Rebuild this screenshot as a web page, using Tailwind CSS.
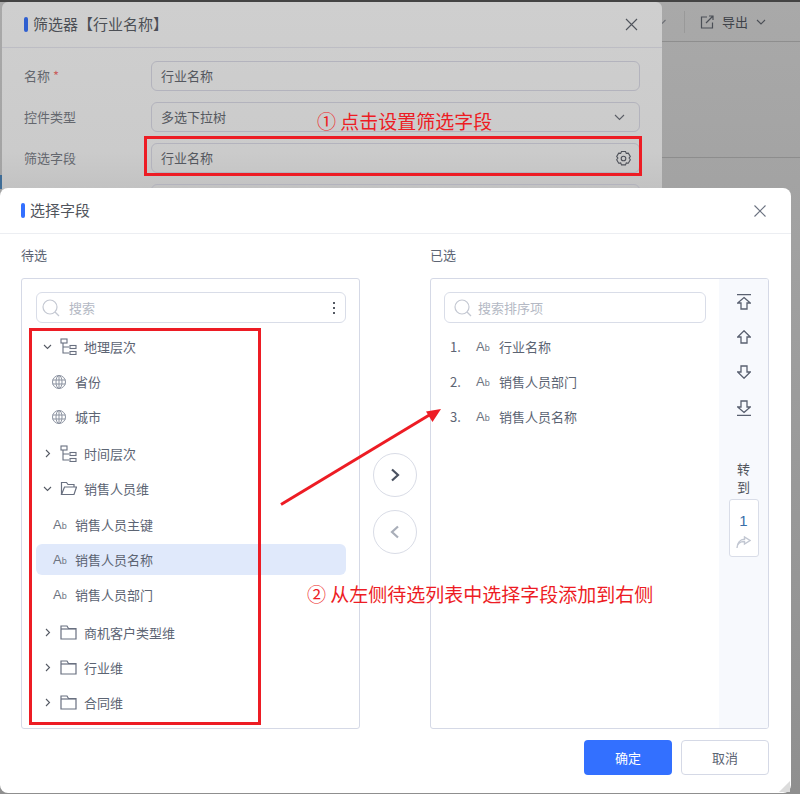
<!DOCTYPE html>
<html lang="zh-CN">
<head>
  <meta charset="UTF-8">
  <title>选择字段</title>
  <script src="https://cdn.jsdelivr.net/npm/@tailwindcss/browser@4"></script>
</head>
<body class="relative w-[800px] h-[794px] overflow-hidden bg-linear-to-b from-[#a9a9a9] to-[#8f8f8f] text-[13px] text-[#5c6473] font-['Noto_Sans_CJK_SC','Liberation_Sans',sans-serif]">
  <!-- page behind the dialogs -->
  <div class="h-[2px] bg-[#444444]"></div>
  <div class="absolute left-[662px] right-0 top-[2px] h-[40px] border-b border-[#8e8e8e] flex items-center text-[#3f434a]">
    <svg class="shrink-0" width="4" height="6" viewBox="0 0 4 6" fill="none" stroke="#6b6e74" stroke-width="1.100"><path d="M0 4.500L3.500 1"/></svg>
    <span class="w-[19px] h-[22px] border-r border-[#999999]"></span>
    <svg class="ml-[15px] mr-[8px]" width="14" height="14" viewBox="0 0 14 14" fill="none" stroke="#4b4f56" stroke-width="1.2"><path d="M7 2H1.500v11h11V7.500"/><path d="M6 8l7-7M9 1h4v4"/></svg>
    <span>导出</span>
    <svg class="ml-[8px]" width="10" height="6" viewBox="0 0 10 6" fill="none" stroke="#4b4f56" stroke-width="1.1"><path d="M1 1l4 4 4-4"/></svg>
  </div>
  <div class="absolute left-[662px] right-0 top-[157px] h-px bg-[#8d8d8d]"></div>
  <div class="absolute left-0 top-[175px] w-[2px] h-[14px] bg-[#3e6c96]"></div>

  <!-- filter dialog, dimmed -->
  <div class="absolute left-[2px] top-[2px] w-[660px] h-[300px] rounded-t-md bg-linear-to-b from-[#cfcfcf] via-[#cbcbcb] to-[#a8a8a8] text-[#55585f]">
    <div class="h-[46px] border-b border-[#bdbdc4] flex items-center pl-[22px] pr-[24px]">
      <span class="w-[4px] h-[15px] rounded-sm bg-[#2f5fd0] mr-[5px]"></span>
      <span class="text-[15px] text-[#4c4f55]">筛选器【行业名称】</span>
      <svg class="ml-auto" width="13" height="13" viewBox="0 0 13 13" stroke="#50545c" stroke-width="1.1"><path d="M1 1l11 11M12 1L1 12"/></svg>
    </div>
    <div class="pl-[22px] pr-[22px] pt-[13px] flex flex-col gap-[11px]">
      <div class="flex items-center">
        <span class="w-[127px] text-[#64676e]">名称 <span class="text-[#c9605f]">*</span></span>
        <div class="flex-1 h-[30px] border border-[#b3b3bd] rounded-md flex items-center px-[9px]">行业名称</div>
      </div>
      <div class="flex items-center">
        <span class="w-[127px] text-[#64676e]">控件类型</span>
        <div class="flex-1 h-[30px] border border-[#b3b3bd] rounded-md flex items-center justify-between pl-[9px] pr-[14px]">
          <span>多选下拉树</span>
          <svg width="11" height="7" viewBox="0 0 11 7" fill="none" stroke="#5b5e66" stroke-width="1.1"><path d="M1 1l4.500 4.500L10 1"/></svg>
        </div>
      </div>
      <div class="flex items-center">
        <span class="w-[127px] text-[#64676e]">筛选字段</span>
        <div class="flex-1 h-[30px] border border-[#b3b3bd] rounded-md flex items-center justify-between pl-[9px] pr-[7px]">
          <span>行业名称</span>
          <svg width="17" height="17" viewBox="0 0 17 17" fill="none" stroke="#4f525a" stroke-width="1.1"><path d="M6.500 1.500h4l.8 1.900 2-.3 2 3.400-1.200 1.600 1.200 1.700-2 3.400-2-.3-.8 2h-4l-.8-2-2 .3-2-3.400 1.200-1.700L1.700 6.500l2-3.400 2 .3z"/><circle cx="8.500" cy="8.500" r="2.300"/></svg>
        </div>
      </div>
      <div class="flex items-center">
        <span class="w-[127px]"></span>
        <div class="flex-1 h-[30px] border border-[#b3b3bd] rounded-md"></div>
      </div>
    </div>
  </div>

  <!-- field picker dialog -->
  <div class="absolute left-0 top-[188px] w-[791px] h-[605px] bg-white rounded-lg flex flex-col">
    <div class="h-[46px] shrink-0 border-b border-[#eceef2] flex items-center pl-[21px] pr-[25px]">
      <span class="w-[4px] h-[15px] rounded-sm bg-[#3370ff] mr-[5px]"></span>
      <span class="text-[15px] text-[#50545c]">选择字段</span>
      <svg class="ml-auto" width="12" height="12" viewBox="0 0 12 12" stroke="#6b7280" stroke-width="1.1"><path d="M.5.500l11 11M11.500.500l-11 11"/></svg>
    </div>
    <div class="flex-1 flex px-[21px]">
      <!-- left column -->
      <div class="w-[339px] shrink-0 flex flex-col">
        <div class="h-[44px] pt-[11px] leading-[20px]">待选</div>
        <div class="h-[451px] border border-[#d5d9e6] rounded-[3px] pl-[14px] pr-[13px] pt-[13px]">
          <div class="h-[31px] border border-[#d9dde8] rounded-md flex items-center pl-[5px] pr-[10px] text-[#b4b9c4]">
            <svg class="mr-[9px]" width="18" height="18" viewBox="0 0 18 18" fill="none" stroke="#c4c8d2" stroke-width="1.2"><circle cx="8" cy="8" r="7"/><path d="M13 13l4 4"/></svg>
            <span>搜索</span>
            <span class="ml-auto flex flex-col gap-[3px]"><i class="block w-[2px] h-[2px] bg-[#555a64]"></i><i class="block w-[2px] h-[2px] bg-[#555a64]"></i><i class="block w-[2px] h-[2px] bg-[#555a64]"></i></span>
          </div>
          <div class="mt-[6px] flex flex-col">
            <div class="h-[35px] flex items-center">
              <svg class="ml-[7px] mr-[8px]" width="9" height="6" viewBox="0 0 9 6" fill="none" stroke="#555a64" stroke-width="1.100"><path d="M1 1l3.500 3.500L8 1"/></svg>
              <svg class="mr-[7px]" width="17" height="17" viewBox="0 0 17 17" fill="none" stroke="#697080" stroke-width="1.100"><rect x="1" y="1" width="6" height="4"/><path d="M3 5v10h6M3 9h6"/><rect x="10" y="7.500" width="6" height="3"/><rect x="10" y="13.500" width="6" height="3"/></svg>
              <span>地理层次</span>
            </div>
            <div class="h-[35px] flex items-center pl-[16px]">
              <svg class="mr-[9px]" width="14" height="14" viewBox="0 0 14 14" fill="none" stroke="#8b92a0"><circle cx="7" cy="7" r="6.500"/><ellipse cx="7" cy="7" rx="3" ry="6.500"/><path d="M7 .5v13M.5 5h13M.5 9h13"/></svg>
              <span>省份</span>
            </div>
            <div class="h-[35px] flex items-center pl-[16px]">
              <svg class="mr-[9px]" width="14" height="14" viewBox="0 0 14 14" fill="none" stroke="#8b92a0"><circle cx="7" cy="7" r="6.500"/><ellipse cx="7" cy="7" rx="3" ry="6.500"/><path d="M7 .5v13M.5 5h13M.5 9h13"/></svg>
              <span>城市</span>
            </div>
            <div class="mt-[2px] h-[35px] flex items-center">
              <svg class="ml-[9px] mr-[9px]" width="6" height="9" viewBox="0 0 6 9" fill="none" stroke="#555a64" stroke-width="1.100"><path d="M1 1l3.500 3.500L1 8"/></svg>
              <svg class="mr-[7px]" width="17" height="17" viewBox="0 0 17 17" fill="none" stroke="#697080" stroke-width="1.100"><rect x="1" y="1" width="6" height="4"/><path d="M3 5v10h6M3 9h6"/><rect x="10" y="7.500" width="6" height="3"/><rect x="10" y="13.500" width="6" height="3"/></svg>
              <span>时间层次</span>
            </div>
            <div class="h-[35px] flex items-center">
              <svg class="ml-[7px] mr-[8px]" width="9" height="6" viewBox="0 0 9 6" fill="none" stroke="#555a64" stroke-width="1.100"><path d="M1 1l3.500 3.500L8 1"/></svg>
              <svg class="mr-[7px]" width="17" height="15" viewBox="0 0 17 15" fill="none" stroke="#697080" stroke-width="1.200"><path d="M1.500 13.500V1.500h5l1.500 2h6v2.500"/><path d="M1.500 13.500l3-7.500h12l-2.500 7.500z"/></svg>
              <span>销售人员维</span>
            </div>
            <div class="mt-px h-[35px] flex items-center pl-[17px]">
              <span class="w-[22px] font-['Liberation_Sans',sans-serif] text-[#6d7482]">A<span class="text-[9px]">b</span></span>
              <span>销售人员主键</span>
            </div>
            <div class="h-[31px] my-[2px] bg-[#e0e9fb] rounded-md flex items-center pl-[17px]">
              <span class="w-[22px] font-['Liberation_Sans',sans-serif] text-[#6d7482]">A<span class="text-[9px]">b</span></span>
              <span>销售人员名称</span>
            </div>
            <div class="h-[35px] flex items-center pl-[17px]">
              <span class="w-[22px] font-['Liberation_Sans',sans-serif] text-[#6d7482]">A<span class="text-[9px]">b</span></span>
              <span>销售人员部门</span>
            </div>
            <div class="mt-[3px] h-[35px] flex items-center">
              <svg class="ml-[9px] mr-[9px]" width="6" height="9" viewBox="0 0 6 9" fill="none" stroke="#555a64" stroke-width="1.100"><path d="M1 1l3.500 3.500L1 8"/></svg>
              <svg class="mr-[7px]" width="17" height="15" viewBox="0 0 17 15" fill="none" stroke="#697080" stroke-width="1.200"><path d="M1 14V1h6l1.500 2.500H16V14z"/><path d="M1 4h15"/></svg>
              <span>商机客户类型维</span>
            </div>
            <div class="h-[35px] flex items-center">
              <svg class="ml-[9px] mr-[9px]" width="6" height="9" viewBox="0 0 6 9" fill="none" stroke="#555a64" stroke-width="1.100"><path d="M1 1l3.500 3.500L1 8"/></svg>
              <svg class="mr-[7px]" width="17" height="15" viewBox="0 0 17 15" fill="none" stroke="#697080" stroke-width="1.200"><path d="M1 14V1h6l1.500 2.500H16V14z"/><path d="M1 4h15"/></svg>
              <span>行业维</span>
            </div>
            <div class="h-[35px] flex items-center">
              <svg class="ml-[9px] mr-[9px]" width="6" height="9" viewBox="0 0 6 9" fill="none" stroke="#555a64" stroke-width="1.100"><path d="M1 1l3.500 3.500L1 8"/></svg>
              <svg class="mr-[7px]" width="17" height="15" viewBox="0 0 17 15" fill="none" stroke="#697080" stroke-width="1.200"><path d="M1 14V1h6l1.500 2.500H16V14z"/><path d="M1 4h15"/></svg>
              <span>合同维</span>
            </div>
          </div>
        </div>
      </div>

      <!-- move buttons -->
      <div class="w-[70px] shrink-0 flex flex-col items-center pt-[219px] gap-[13px]">
        <div class="w-[44px] h-[44px] rounded-full border border-[#d9dce6] flex items-center justify-center">
          <svg width="10" height="14" viewBox="0 0 10 14" fill="none" stroke="#4a5160" stroke-width="2.200"><path d="M2 1.500L8 7l-6 5.500"/></svg>
        </div>
        <div class="w-[44px] h-[44px] rounded-full border border-[#d9dce6] flex items-center justify-center">
          <svg width="10" height="14" viewBox="0 0 10 14" fill="none" stroke="#a9aeb9" stroke-width="2.200"><path d="M8 1.500L2 7l6 5.500"/></svg>
        </div>
      </div>

      <!-- right column -->
      <div class="w-[339px] shrink-0 flex flex-col">
        <div class="h-[44px] pt-[11px] leading-[20px]">已选</div>
        <div class="h-[451px] border border-[#d5d9e6] rounded-[3px] flex overflow-hidden">
          <div class="w-[288px] shrink-0 px-[13px] pt-[13px]">
            <div class="h-[31px] border border-[#d9dde8] rounded-md flex items-center pl-[9px] text-[#b4b9c4]">
              <svg class="mr-[6px]" width="18" height="18" viewBox="0 0 18 18" fill="none" stroke="#c4c8d2" stroke-width="1.200"><circle cx="8" cy="8" r="7"/><path d="M13 13l4 4"/></svg>
              <span>搜索排序项</span>
            </div>
            <div class="mt-[6px] flex flex-col">
              <div class="h-[35px] flex items-center pl-[6px]">
                <span class="w-[26px]">1.</span>
                <span class="w-[23px] font-['Liberation_Sans',sans-serif] text-[#6d7482]">A<span class="text-[9px]">b</span></span>
                <span>行业名称</span>
              </div>
              <div class="h-[35px] flex items-center pl-[6px]">
                <span class="w-[26px]">2.</span>
                <span class="w-[23px] font-['Liberation_Sans',sans-serif] text-[#6d7482]">A<span class="text-[9px]">b</span></span>
                <span>销售人员部门</span>
              </div>
              <div class="h-[35px] flex items-center pl-[6px]">
                <span class="w-[26px]">3.</span>
                <span class="w-[23px] font-['Liberation_Sans',sans-serif] text-[#6d7482]">A<span class="text-[9px]">b</span></span>
                <span>销售人员名称</span>
              </div>
            </div>
          </div>
          <div class="flex-1 bg-[#f7f9fd] flex flex-col items-center pt-[15px]">
            <svg width="14" height="16" viewBox="0 0 14 16" fill="none" stroke="#596070" stroke-width="1.300"><path d="M0 .6h14"/><path d="M7 3.500l6.300 5.500H10v6H4V9H.7z"/></svg>
            <svg class="mt-[20px]" width="14" height="14" viewBox="0 0 14 14" fill="none" stroke="#596070" stroke-width="1.300"><path d="M7 .8l6.300 6.200H10v6H4V7H.7z"/></svg>
            <svg class="mt-[21px]" width="14" height="14" viewBox="0 0 14 14" fill="none" stroke="#596070" stroke-width="1.300"><path d="M7 13.200l6.300-6.200H10V1H4v6H.7z"/></svg>
            <svg class="mt-[21px]" width="14" height="16" viewBox="0 0 14 16" fill="none" stroke="#596070" stroke-width="1.300"><path d="M7 12.500l6.300-5.500H10V1H4v6H.7z"/><path d="M0 15.400h14"/></svg>
            <div class="mt-[44px] text-center leading-[18px] text-[#50545c]">转<br>到</div>
            <div class="mt-[3px] w-[30px] h-[58px] bg-white border border-[#d9dde8] rounded-[3px] flex flex-col items-center pt-[11px]">
              <span class="leading-[20px] text-[15px] text-[#3a6ea8] font-['Liberation_Sans',sans-serif]">1</span>
              <svg class="mt-[5px]" width="15" height="13" viewBox="0 0 15 13" fill="none" stroke="#c2c7d2" stroke-width="1.400"><path d="M1 12c0-4 3-6.500 7.500-6.500V8L14 4.500 8.500 1v2.300C4 3.500 1 7 1 12z"/></svg>
            </div>
          </div>
        </div>
      </div>
    </div>
    <div class="h-[65px] shrink-0 flex justify-end gap-[9px] pr-[22px] pt-[11px]">
      <button class="w-[88px] h-[35px] rounded-[4px] bg-[#3370ff] text-white">确定</button>
      <button class="w-[88px] h-[35px] rounded-[4px] border border-[#d5d9e6] bg-white text-[#5c6473]">取消</button>
    </div>
    <svg class="absolute right-[1px] bottom-[1px]" width="11" height="11" viewBox="0 0 11 11"><path d="M11 0v11H0z" fill="#dcdcdc"/></svg>
  </div>

  <!-- red annotations on top of the screenshot -->
  <div class="absolute left-[144px] top-[136px] w-[498px] h-[40px] border-[3px] border-[#ed1c24]"></div>
  <div class="absolute left-[29px] top-[328px] w-[232px] h-[397px] border-[3px] border-[#ed1c24]"></div>
  <span class="absolute left-[317px] top-[108px] text-[19px] leading-[26px] text-[#ed1c24] whitespace-nowrap">① 点击设置筛选字段</span>
  <span class="absolute left-[307px] top-[581px] text-[19px] leading-[26px] text-[#ed1c24] whitespace-nowrap">② 从左侧待选列表中选择字段添加到右侧</span>
  <svg class="absolute left-[275px] top-[400px]" width="175" height="110" viewBox="0 0 175 110" fill="none"><path d="M6 104.500L156 14" stroke="#ed1c24" stroke-width="3"/><path d="M166 9l-15 2.500 6.500 10.500z" fill="#ed1c24"/></svg>
</body>
</html>
